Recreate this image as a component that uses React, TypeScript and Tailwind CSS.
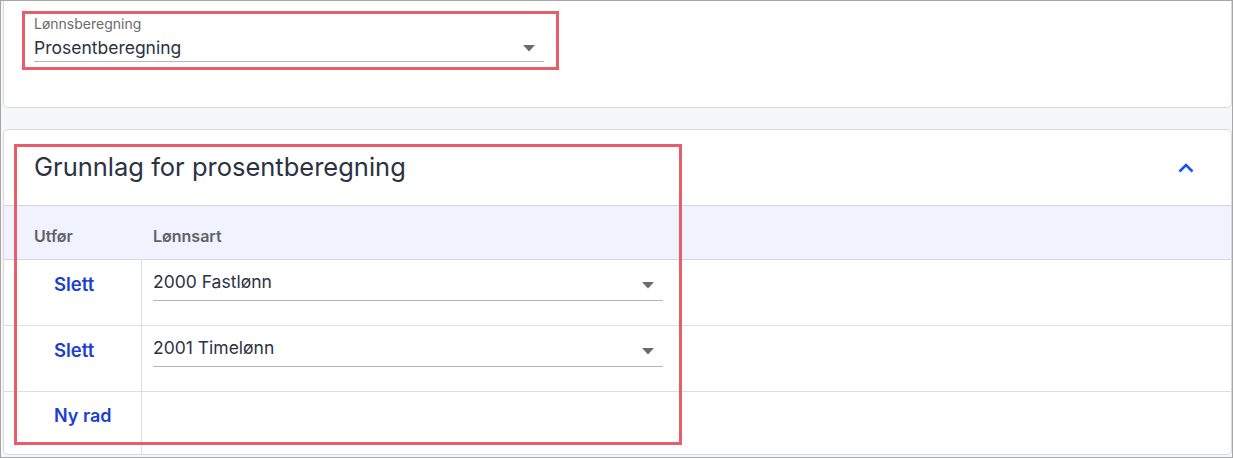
import React from 'react';

const font = { fontFamily: 'Inter, "Noto Sans", sans-serif' };

const Caret: React.FC = () => (
  <svg width="12" height="7" viewBox="0 0 12 7" className="shrink-0">
    <path d="M0 0 H12 L6 6.5 Z" fill="#6b6b6b" />
  </svg>
);

const ChevronUp: React.FC = () => (
  <svg width="16" height="10" viewBox="0 0 16 10">
    <path d="M1.5 8.5 L8 2 L14.5 8.5" fill="none" stroke="#1a52f0" strokeWidth="2.6" />
  </svg>
);

const rows = [
  { action: 'Slett', value: '2000 Fastlønn' },
  { action: 'Slett', value: '2001 Timelønn' },
];

const App: React.FC = () => {
  return (
    <div className="w-[1233px] h-[458px] border border-[#a6a6a6] bg-[#f6f7fb] overflow-hidden" style={font}>
      <div className="relative h-full pl-[2px]">
        {/* Lønnsberegning card */}
        <div className="h-[107px] bg-white border-x border-b border-[#d7d9df] rounded-b-[5px] pl-[30px] pt-[15px]">
          <div className="w-[510px]">
            <div className="text-[14px] leading-[16px] text-[#6b6b6b]">Lønnsberegning</div>
            <div className="flex items-center justify-between h-[30px] pt-[3px] border-b border-[#b5b5b5] pr-[9px]">
              <span className="text-[17.5px] leading-[24px] text-[#2b3242]">Prosentberegning</span>
              <Caret />
            </div>
          </div>
        </div>

        {/* Grunnlag card */}
        <div className="mt-[21px] h-[326px] bg-white border border-[#d7d9df] rounded-[5px] overflow-hidden">
          <div className="h-[75px] flex items-center justify-between pl-[30px] pr-[37px]">
            <h2 className="text-[25.5px] leading-[32px] text-[#2b3242] -mt-[2px]">Grunnlag for prosentberegning</h2>
            <ChevronUp />
          </div>
          <div className="h-[55px] flex items-center pt-[7px] bg-[#f0f3fe] border-y border-[#d5d7df] text-[16px] font-semibold text-[#5f6266]">
            <div className="w-[138px] pl-[30px]">Utfør</div>
            <div className="pl-[11px]">Lønnsart</div>
          </div>
          {rows.map((r, i) => (
            <div key={i} className="h-[66px] flex border-b border-[#dedede]">
              <div className="w-[138px] border-r border-[#dedede] pl-[50px] pt-[13px] text-[18.5px] leading-[22px] font-semibold text-[#1c3fcf]">
                {r.action}
              </div>
              <div className="pl-[11px] pt-[10px]">
                <div className="w-[510px] h-[31px] flex items-center justify-between border-b border-[#b5b5b5] pr-[9px]">
                  <span className="text-[17.5px] leading-[24px] text-[#2b3242] -mt-[7px]">{r.value}</span>
                  <Caret />
                </div>
              </div>
            </div>
          ))}
          <div className="h-[66px] flex">
            <div className="w-[138px] border-r border-[#dedede] pl-[50px] pt-[13px] text-[18px] leading-[22px] font-semibold text-[#1c3fcf]">
              Ny rad
            </div>
          </div>
        </div>

        {/* annotation boxes */}
        <div className="absolute left-[21px] top-[10px] w-[537px] h-[59px] border-[3px] border-[#e95d6b]" />
        <div className="absolute left-[13px] top-[143px] w-[668px] h-[301px] border-[3px] border-[#e95d6b]" />
      </div>
    </div>
  );
};

export default App;
